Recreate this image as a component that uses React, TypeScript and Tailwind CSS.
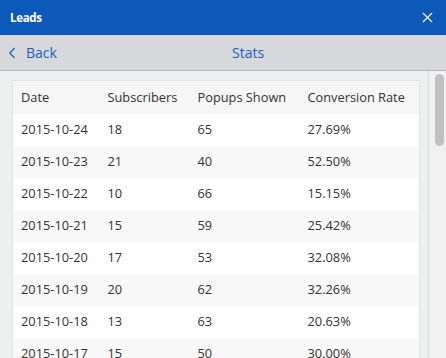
import { X, ChevronLeft } from 'lucide-react';

type Row = {
  date: string;
  subscribers: number;
  shown: number;
  rate: string;
};

const rows: Row[] = [
  { date: '2015-10-24', subscribers: 18, shown: 65, rate: '27.69%' },
  { date: '2015-10-23', subscribers: 21, shown: 40, rate: '52.50%' },
  { date: '2015-10-22', subscribers: 10, shown: 66, rate: '15.15%' },
  { date: '2015-10-21', subscribers: 15, shown: 59, rate: '25.42%' },
  { date: '2015-10-20', subscribers: 17, shown: 53, rate: '32.08%' },
  { date: '2015-10-19', subscribers: 20, shown: 62, rate: '32.26%' },
  { date: '2015-10-18', subscribers: 13, shown: 63, rate: '20.63%' },
  { date: '2015-10-17', subscribers: 15, shown: 50, rate: '30.00%' },
];

export default function App() {
  return (
    <div className="w-[446px] h-[358px] overflow-hidden flex flex-col bg-[#eef0f0] font-['Open_Sans',sans-serif]">
      <div className="h-[35px] shrink-0 bg-[#0d59b9] flex items-center justify-between pl-[10px] pr-[10px]">
        <span className="text-white text-[11.5px] font-bold tracking-tight">Leads</span>
        <X className="w-[17px] h-[17px] text-white" strokeWidth={1.5} />
      </div>

      <div className="h-[36px] shrink-0 bg-[#d6d8db] border-b border-[#b4b6b9] flex items-center relative">
        <div className="flex items-center pl-[3px] text-[#1c5fc1]">
          <ChevronLeft className="w-[18px] h-[18px]" strokeWidth={1.6} />
          <span className="ml-[5px] text-[14px]">Back</span>
        </div>
        <span className="absolute left-[232px] text-[14px] text-[#1c5fc1]">Stats</span>
      </div>

      <div className="flex-1 flex min-h-0">
        <div className="flex-1 pl-[12px] pr-[8px] pt-[9px] overflow-hidden">
          <table className="w-[408px] table-fixed border-collapse bg-white border border-[#e2e4e4] text-[12.8px] text-[#333]">
            <colgroup>
              <col className="w-[87px]" />
              <col className="w-[90px]" />
              <col className="w-[110px]" />
              <col />
            </colgroup>
            <thead>
              <tr className="h-[33px] bg-[#f6f6f6]">
                <th className="text-left font-normal pl-[8px]">Date</th>
                <th className="text-left font-normal pl-[8px]">Subscribers</th>
                <th className="text-left font-normal pl-[8px]">Popups Shown</th>
                <th className="text-left font-normal pl-[8px]">Conversion Rate</th>
              </tr>
            </thead>
            <tbody>
              {rows.map((r, i) => (
                <tr key={r.date} className={`h-[32px] ${i % 2 === 1 ? 'bg-[#f8f8f8]' : 'bg-white'}`}>
                  <td className="pl-[8px]">{r.date}</td>
                  <td className="pl-[8px]">{r.subscribers}</td>
                  <td className="pl-[8px]">{r.shown}</td>
                  <td className="pl-[8px]">{r.rate}</td>
                </tr>
              ))}
            </tbody>
          </table>
        </div>
        <div className="w-[18px] shrink-0 border-l border-[#dcdede] bg-[#f1f1f1] pt-[3px] flex justify-center pl-[4px]">
          <div className="w-[9px] h-[72px] rounded-full bg-[#c1c1c1]" />
        </div>
      </div>
    </div>
  );
}
